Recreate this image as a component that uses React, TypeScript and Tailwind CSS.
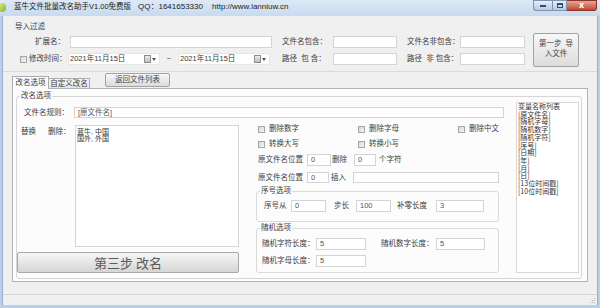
import React from "react";

const Input = ({ cls, v }: { cls: string; v?: string }) => (
  <div className={"shrink-0 bg-white border border-[#d4d4d4] flex items-center pl-[3px] text-[#555] " + cls}>{v}</div>
);

const Check = ({ cls = "" }: { cls?: string }) => (
  <div className={"w-[7px] h-[7px] shrink-0 border border-[#a6a6a6] bg-gradient-to-br from-[#d6d6d6] to-[#f7f7f7] " + cls} />
);

const DatePicker = () => (
  <div className="w-[92px] h-[12px] shrink-0 flex items-center bg-white border border-[#e6e6e6]">
    <span className="ml-[1px] whitespace-nowrap">2021年11月15日</span>
    <div className="ml-auto mr-[3px] flex items-center gap-[1px]">
      <div className="w-[7px] h-[8px] border border-[#8c8c8c] bg-gradient-to-b from-[#ececec] to-[#bcbcbc]" />
      <svg width="4" height="3" viewBox="0 0 4 3">
        <path d="M0 0H4L2 3Z" fill="#555" />
      </svg>
    </div>
  </div>
);

const CheckItem = ({ label, cls = "w-[100px]" }: { label: string; cls?: string }) => (
  <div className={"flex items-center shrink-0 " + cls}>
    <Check />
    <span className="ml-[4px] whitespace-nowrap">{label}</span>
  </div>
);

const vars = [
  "变量名称列表",
  "[原文件名]",
  "[随机字母]",
  "[随机数字]",
  "[随机字符]",
  "[序号]",
  "[日期]",
  "[年]",
  "[月]",
  "[日]",
  "[13位时间戳]",
  "[10位时间戳]",
];

export default function App() {
  return (
    <div className="w-[600px] h-[308px] overflow-hidden flex flex-col bg-[#b8cee9] text-[#3c3c3c] font-['Liberation_Sans','Noto_Sans_CJK_SC',sans-serif] text-[7.5px] leading-[10px]">
      {/* title bar */}
      <div className="h-[16px] shrink-0 flex items-start bg-gradient-to-b from-[#dde9f7] to-[#c8daef]">
        <div className="w-[8px] h-[9px] ml-[-2px] mt-[3px] rounded-full bg-gradient-to-br from-[#eef27a] to-[#78b43a]" />
        <div className="ml-[8px] mt-[2px] flex text-[8px] leading-[10px] text-[#1c1c1c] whitespace-nowrap">
          <span className="w-[124px] text-[7.5px]">蓝牛文件批量改名助手V1.00免费版</span>
          <span className="w-[74px]">QQ：1641653330</span>
          <span>http://www.lanniuw.cn</span>
        </div>
        <div className="ml-auto mr-[3px] flex h-[11px]">
          <div className="w-[19px] h-full border border-[#7d93b2] border-r-0 rounded-bl-[3px] bg-gradient-to-b from-[#e6eef8] to-[#b7c9df] flex items-end justify-center pb-[3px]">
            <div className="w-[6px] h-[2px] bg-[#3b4a5e]" />
          </div>
          <div className="w-[15px] h-full border border-[#7d93b2] bg-gradient-to-b from-[#e6eef8] to-[#b7c9df] flex items-center justify-center">
            <div className="w-[6px] h-[5px] border border-[#3b4a5e] border-t-2" />
          </div>
          <div className="w-[30px] h-full border border-[#8a3428] border-l-0 rounded-br-[3px] bg-gradient-to-b from-[#e8a597] to-[#c4442f] flex items-center justify-center">
            <span className="text-white text-[8px] leading-none font-bold font-['DejaVu_Sans',sans-serif]">x</span>
          </div>
        </div>
      </div>

      {/* client */}
      <div className="flex-1 mx-[2px] mb-[3px] border-x border-[#97b0cf] bg-[#f0f0f0] flex flex-col">
        {/* import filter */}
        <div className="h-[56px] shrink-0 flex border-b border-[#dadada]">
          <div className="flex flex-col">
            <div className="ml-[12px] mt-[6px] h-[10px]">导入过滤</div>
            <div className="mt-[4px] h-[12px] flex items-center whitespace-nowrap">
              <span className="ml-[32px] w-[35px] shrink-0">扩展名：</span>
              <Input cls="w-[202px] h-[12px]" />
              <span className="ml-[10px] w-[51px] shrink-0">文件名包含：</span>
              <Input cls="w-[64px] h-[12px]" />
              <span className="ml-[10px] w-[53px] shrink-0">文件名非包含：</span>
              <Input cls="w-[65px] h-[12px]" />
            </div>
            <div className="mt-[5px] h-[12px] flex items-center whitespace-nowrap">
              <Check cls="ml-[17px]" />
              <span className="ml-[2px] w-[39px] shrink-0">修改时间：</span>
              <DatePicker />
              <span className="w-[18px] shrink-0 text-center">~</span>
              <DatePicker />
              <span className="ml-[12px] w-[51px] shrink-0 whitespace-pre">路径  包 含：</span>
              <Input cls="w-[64px] h-[12px]" />
              <span className="ml-[10px] w-[53px] shrink-0 whitespace-pre">路径  非 包含：</span>
              <Input cls="w-[65px] h-[12px]" />
            </div>
          </div>
          <div className="ml-[8px] mt-[17px] w-[46px] h-[34px] shrink-0 border border-[#a2a2a2] rounded-[2px] bg-gradient-to-b from-[#f7f7f7] to-[#dcdcdc] flex flex-col items-center justify-center pb-[3px] text-[#444]">
            <span className="whitespace-pre">第一步  导</span>
            <span>入文件</span>
          </div>
        </div>

        {/* tabs */}
        <div className="h-[16px] shrink-0 flex items-end ml-[9px]">
          <div className="w-[37px] h-[13px] mb-[-1px] relative z-10 bg-[#fcfcfc] border border-b-0 border-[#acacac] flex items-center justify-center whitespace-nowrap">
            改名选项
          </div>
          <div className="w-[41px] h-[10px] bg-gradient-to-b from-[#f6f6f6] to-[#e4e4e4] border border-b-0 border-l-0 border-[#acacac] flex items-center justify-center whitespace-nowrap">
            自定义改名
          </div>
          <div className="self-start mt-[1px] ml-[15px] w-[65px] h-[14px] border border-[#a2a2a2] rounded-[2px] bg-gradient-to-b from-[#f7f7f7] to-[#dcdcdc] flex items-center justify-center whitespace-nowrap text-[#444]">
            返回文件列表
          </div>
        </div>

        {/* panel */}
        <div className="ml-[9px] w-[576px] h-[194px] shrink-0 border border-[#b4b4b4] bg-[#fcfcfc]">
          <fieldset className="ml-[3px] mt-[2px] w-[566px] h-[188px] border border-[#d6d6d6] rounded-[3px]">
            <legend className="ml-[3px] px-[1px] h-[10px] leading-[10px]">改名选项</legend>
            <div className="flex">
              {/* main column */}
              <div className="w-[487px] shrink-0 flex flex-col">
                <div className="mt-[6px] h-[11px] flex items-center">
                  <span className="ml-[7px] w-[50px] shrink-0 whitespace-nowrap">文件名规则：</span>
                  <Input cls="w-[430px] h-[11px]" v="[原文件名]" />
                </div>
                <div className="mt-[7px] flex">
                  {/* left */}
                  <div className="w-[222px] shrink-0 flex flex-col">
                    <div className="flex items-start">
                      <div className="ml-[4px] w-[54px] mt-[2px] shrink-0 flex whitespace-nowrap">
                        <span>替换</span>
                        <span className="ml-[12px]">删除：</span>
                      </div>
                      <div className="w-[164px] h-[122px] shrink-0 bg-white border border-[#d4d4d4] pl-[1px] pt-[3px] text-[7px] leading-[6.5px] text-[#333]">
                        <div>蓝牛, 中国</div>
                        <div>国外, 外国</div>
                      </div>
                    </div>
                    <div className="mt-[5px] w-[222px] h-[21px] border border-[#a8a8a8] rounded-[2px] bg-gradient-to-b from-[#f6f6f6] to-[#d6d6d6] flex items-center justify-center text-[13px] leading-none text-[#5a5a5a] whitespace-pre font-['Noto_Sans_CJK_SC',sans-serif]">
                      第三步 改名
                    </div>
                  </div>
                  {/* right */}
                  <div className="pl-[17px] flex flex-col">
                    <div className="ml-[2px] h-[8px] flex items-center">
                      <CheckItem label="删除数字" />
                      <CheckItem label="删除字母" />
                      <CheckItem label="删除中文" cls="" />
                    </div>
                    <div className="ml-[2px] mt-[7px] h-[8px] flex items-center">
                      <CheckItem label="转换大写" />
                      <CheckItem label="转换小写" cls="" />
                    </div>
                    <div className="ml-[2px] mt-[6px] h-[12px] flex items-center whitespace-nowrap">
                      <span className="w-[49px] shrink-0">原文件名位置</span>
                      <Input cls="w-[24px] h-[12px]" v="0" />
                      <span className="ml-[1px] w-[22px] shrink-0">删除</span>
                      <Input cls="w-[22px] h-[12px]" v="0" />
                      <span className="ml-[3px]">个字符</span>
                    </div>
                    <div className="ml-[2px] mt-[6px] h-[11px] flex items-center whitespace-nowrap">
                      <span className="w-[49px] shrink-0">原文件名位置</span>
                      <Input cls="w-[22px] h-[11px]" v="0" />
                      <span className="ml-[2px] w-[22px] shrink-0">插入</span>
                      <Input cls="w-[146px] h-[11px]" />
                    </div>
                    <fieldset className="mt-[3px] w-[243px] border border-[#dadada] rounded-[3px]">
                      <legend className="ml-[3px] px-[1px] h-[10px] leading-[10px]">序号选项</legend>
                      <div className="mt-[4px] mb-[9px] h-[12px] flex items-center whitespace-nowrap">
                        <span className="ml-[7px] w-[27px] shrink-0">序号从</span>
                        <Input cls="w-[35px] h-[12px]" v="0" />
                        <span className="ml-[8px] w-[22px] shrink-0">步长</span>
                        <Input cls="w-[35px] h-[12px]" v="100" />
                        <span className="ml-[6px] w-[39px] shrink-0">补零长度</span>
                        <Input cls="w-[48px] h-[12px]" v="3" />
                      </div>
                    </fieldset>
                    <fieldset className="mt-[1px] w-[243px] border border-[#dadada] rounded-[3px]">
                      <legend className="ml-[3px] px-[1px] h-[10px] leading-[10px]">随机选项</legend>
                      <div className="mt-[5px] h-[12px] flex items-center whitespace-nowrap">
                        <span className="ml-[5px] w-[54px] shrink-0">随机字符长度：</span>
                        <Input cls="w-[50px] h-[12px]" v="5" />
                        <span className="ml-[15px] w-[55px] shrink-0">随机数字长度：</span>
                        <Input cls="w-[49px] h-[12px]" v="5" />
                      </div>
                      <div className="mt-[5px] mb-[5px] h-[12px] flex items-center whitespace-nowrap">
                        <span className="ml-[5px] w-[54px] shrink-0">随机字母长度：</span>
                        <Input cls="w-[50px] h-[12px]" v="5" />
                      </div>
                    </fieldset>
                  </div>
                </div>
              </div>
              {/* variable list */}
              <div className="ml-[12px] mt-[1px] w-[63px] h-[171px] shrink-0 bg-white border border-[#d8d8d8] px-[1px] text-[7px] leading-[7.7px] text-[#333] font-['Noto_Sans_CJK_SC',sans-serif] whitespace-nowrap">
                {vars.map((s) => (
                  <div key={s}>{s}</div>
                ))}
              </div>
            </div>
          </fieldset>
        </div>

        {/* status strip */}
        <div className="mt-auto h-[11px] shrink-0 border-t border-[#d6d6d6] flex justify-end items-end">
          <svg width="8" height="8" viewBox="0 0 8 8" className="mr-[1px] mb-[1px]">
            <rect x="6" y="2" width="1" height="1" fill="#b5b5b5" />
            <rect x="4" y="4" width="1" height="1" fill="#b5b5b5" />
            <rect x="6" y="4" width="1" height="1" fill="#b5b5b5" />
            <rect x="2" y="6" width="1" height="1" fill="#b5b5b5" />
            <rect x="4" y="6" width="1" height="1" fill="#b5b5b5" />
            <rect x="6" y="6" width="1" height="1" fill="#b5b5b5" />
          </svg>
        </div>
      </div>
    </div>
  );
}
